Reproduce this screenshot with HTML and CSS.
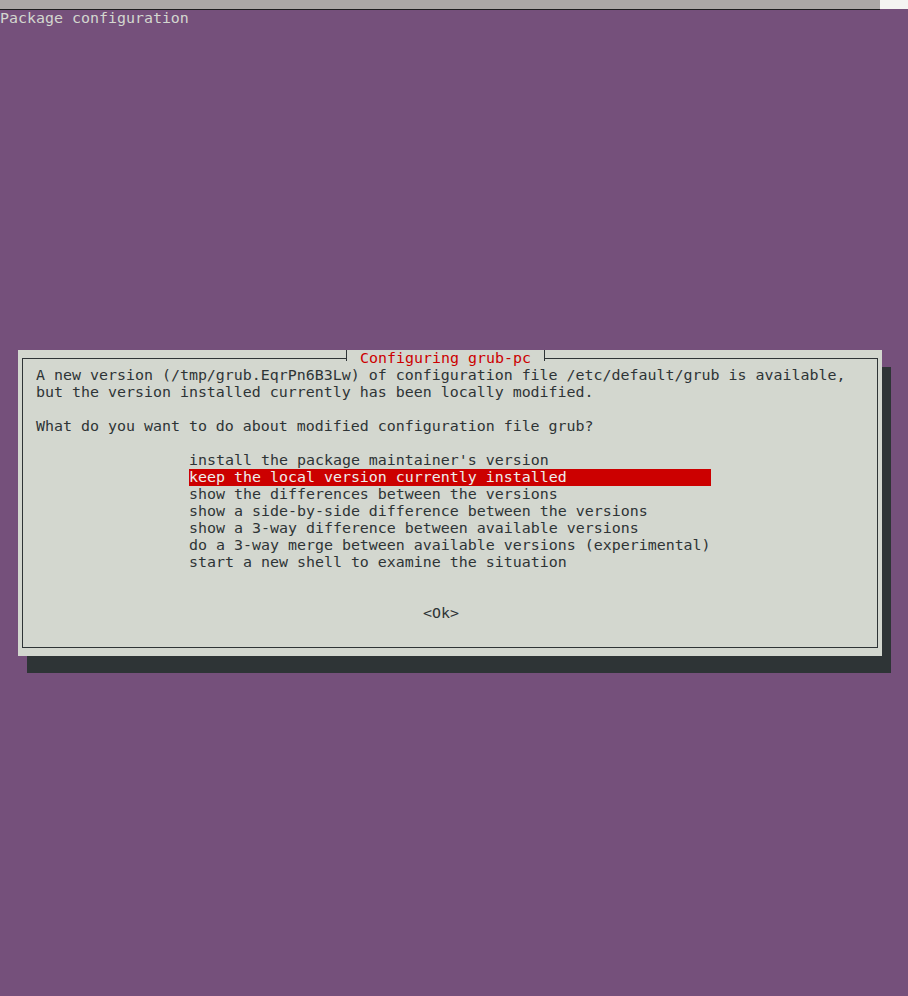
FILE: index.html
```html
<!DOCTYPE html>
<html>
<head>
  <title>Package configuration</title>
  <link rel="stylesheet" href="styles.css">
</head>
<body>

  <div class="topbar">
    <div class="topbar-strip"></div>
    <div class="topbar-box"></div>
  </div>

  <div class="screen">
    <div class="backtitle">Package configuration</div>

    <div class="dialog">
      <div class="frame">
        <div class="title">Configuring grub-pc</div>

        <p class="msg">A new version (/tmp/grub.EqrPn6B3Lw) of configuration file /etc/default/grub is available,
but the version installed currently has been locally modified.</p>

        <p class="msg">What do you want to do about modified configuration file grub?</p>

        <ul class="menu">
          <li>install the package maintainer's version</li>
          <li class="selected">keep the local version currently installed</li>
          <li>show the differences between the versions</li>
          <li>show a side-by-side difference between the versions</li>
          <li>show a 3-way difference between available versions</li>
          <li>do a 3-way merge between available versions (experimental)</li>
          <li>start a new shell to examine the situation</li>
        </ul>

        <div class="buttons">
          <span class="btn">&lt;Ok&gt;</span>
        </div>
      </div>
    </div>
  </div>

</body>
</html>
```

FILE: styles.css
```css
body {
  margin: 0;
  min-height: 996px;
  background-color: #75507b;
  font-family: "DejaVu Sans Mono", "Liberation Mono", monospace;
  font-size: 14.95px;
  line-height: 17px;
  color: #2e3436;
}

.topbar {
  display: flex;
  height: 10px;
}

.topbar-strip {
  flex: 1;
  background-color: #aca8a6;
  border-bottom: 1px solid #1e1e1e;
}

.topbar-box {
  width: 28px;
  height: 9px;
  background-color: #f4f4f2;
}

.screen {
  padding-bottom: 34px;
}

.backtitle {
  color: #d3d7cf;
  height: 17px;
  white-space: pre;
}

.dialog {
  margin: 323px 0 0 18px;
  width: 864px;
  box-sizing: border-box;
  padding: 8px 4px;
  background-color: #d3d7cf;
  box-shadow: 9px 17px 0 #2e3436;
}

.frame {
  position: relative;
  border: 1px solid #2e3436;
  padding: 8px 13px;
}

.title {
  position: absolute;
  top: -9px;
  left: 323px;
  padding: 0 14px;
  background-color: #d3d7cf;
  color: #cc0000;
  white-space: pre;
}

.title::before,
.title::after {
  content: "";
  position: absolute;
  top: 0;
  width: 1px;
  height: 11px;
  background-color: #2e3436;
}

.title::before {
  left: 0;
}

.title::after {
  right: 0;
}

.msg {
  margin: 0 0 17px;
  white-space: pre;
}

.menu {
  list-style: none;
  margin: 0 0 34px 153px;
  padding: 0;
}

.menu li {
  width: 522px;
  height: 17px;
  white-space: pre;
}

.menu .selected {
  background-color: #cc0000;
  color: #eeeeec;
}

.buttons {
  height: 17px;
  margin-bottom: 17px;
  padding-left: 387px;
}
```
